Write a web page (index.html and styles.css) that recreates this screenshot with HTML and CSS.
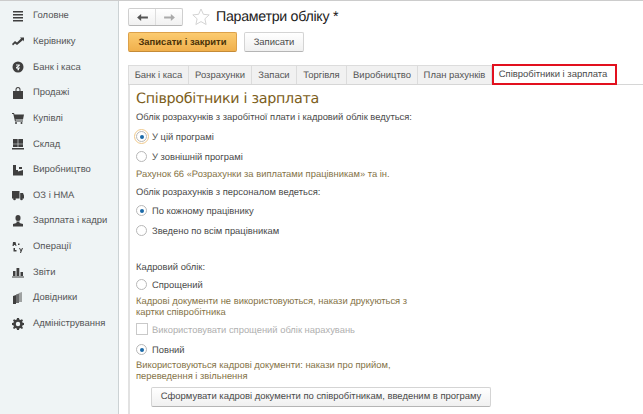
FILE: index.html
```html
<!DOCTYPE html>
<html lang="uk">
<head>
<meta charset="utf-8">
<title>Параметри обліку</title>
<link rel="stylesheet" href="styles.css">
</head>
<body>
<div class="app">
  <aside class="side">
    <div class="item"><svg class="ic" viewBox="0 0 12 12"><path d="M1 1h10v1.600H1zM1 4h10v1.600H1zM1 7h10v1.600H1zM1 10h10v1.600H1z"/></svg><span>Головне</span></div>
    <div class="item"><svg class="ic" viewBox="0 0 12 12"><path d="M0 9l3-3 2 1.500L9 3.500 8 2.500h4v4L11 5 5 10 3 8.500 1 10.500z"/></svg><span>Керівнику</span></div>
    <div class="item"><svg class="ic" viewBox="0 0 12 12"><circle cx="6" cy="6" r="5.500"/><path class="cut" d="M4 3.500h3.800v1.200L5.600 6.500h2.400v1H7v1.800H5.500V7.500H4V6.300L6.200 4.600H4z"/></svg><span>Банк і каса</span></div>
    <div class="item"><svg class="ic" viewBox="0 0 12 12"><path fill-rule="evenodd" d="M1 4h2.500V2.500a2.500 2.500 0 0 1 5 0V4H11v8H1zM4.500 4h3V2.500a1.500 1.500 0 0 0-3 0z"/></svg><span>Продажі</span></div>
    <div class="item"><svg class="ic" viewBox="0 0 12 12"><path d="M0 1h2l.5 1.500H12L11 7.500H3.500L3.800 8.500H11V9.500H3L1.300 2H0z"/><circle cx="4" cy="11" r="1"/><circle cx="9.500" cy="11" r="1"/></svg><span>Купівлі</span></div>
    <div class="item"><svg class="ic" viewBox="0 0 12 12"><path d="M1 1h4.700v4.700H1zM6.300 1H11v4.700H6.300zM1 6.300h4.700V9H1zM6.300 6.300H11V9H6.300zM0 10h12v1.500H0z"/></svg><span>Склад</span></div>
    <div class="item"><svg class="ic" viewBox="0 0 12 12"><path d="M1 1h3v5h2V7.500l5-1.500v5.500H1zM7 3h3v2H7z"/></svg><span>Виробництво</span></div>
    <div class="item"><svg class="ic" viewBox="0 0 12 12"><path d="M0 2h7.500v7.500H0zM8.200 4H11l1 2.500v3H8.200z"/><circle cx="2.500" cy="10" r="1.300"/><circle cx="9.500" cy="10" r="1.300"/></svg><span>ОЗ і НМА</span></div>
    <div class="item"><svg class="ic" viewBox="0 0 12 12"><path d="M3.500 2.500a2.500 2.500 0 0 1 5 0v1a2.500 2.500 0 0 1-5 0zM4.500 6.500h3v1.500l3.500 1V11.500H1V9l3.500-1z"/></svg><span>Зарплата і кадри</span></div>
    <div class="item"><svg class="ic" viewBox="0 0 12 12"><path d="M1 1h2.500l1 4H3.500L3.300 4H2L1.700 5H.5zM6 2.500h1.500V4H6zM1.500 7h1.500V9h1.500V10.500H1.500zM7 7h1l1 2 1-2h1L9 12H8l.5-2z"/></svg><span>Операції</span></div>
    <div class="item"><svg class="ic" viewBox="0 0 12 12"><path d="M1 5h2.500v5H1zM4.500 2h2.800v8H4.500zM8.500 6H11v4H8.500zM0 10.500h12v1H0z"/></svg><span>Звіти</span></div>
    <div class="item"><svg class="ic" viewBox="0 0 12 12"><path d="M1 4l3-1v9H1z"/><path opacity=".75" d="M4 2.500l3-1V11H4z"/><path opacity=".45" d="M7 1l3-1v10H7z"/></svg><span>Довідники</span></div>
    <div class="item"><svg class="ic" viewBox="0 0 12 12"><path fill-rule="evenodd" d="M5 0h2l.3 1.600 1.200.5L9.900 1.200l1.100 1-.9 1.500.5 1.100L12 5v2l-1.400.3-.5 1.200.9 1.400-1.100 1.100-1.400-.9-1.200.5L7 12H5l-.3-1.400-1.200-.5-1.400.9-1.100-1.100.9-1.400-.5-1.200L0 7V5l1.400-.2.500-1.100-.9-1.500 1.100-1 1.400.9 1.200-.5zM6 3.800a2.200 2.200 0 1 0 0 4.400 2.200 2.200 0 0 0 0-4.400z"/></svg><span>Адміністрування</span></div>
  </aside>
  <main class="main">
    <div class="head">
      <div class="nav">
        <button class="nav-btn"><svg viewBox="0 0 12 10"><path class="a-dark" d="M0 5l4.500-4v2.800H12v2.400H4.500V9z"/></svg></button>
        <button class="nav-btn"><svg viewBox="0 0 12 10"><path class="a-light" d="M12 5L7.500 1v2.800H0v2.400h7.500V9z"/></svg></button>
      </div>
      <svg class="star" viewBox="0 0 18 18"><path d="M9 1l2.400 5.300 5.800.6-4.300 3.900 1.200 5.700L9 13.600l-5.100 2.900 1.200-5.700L.8 6.900l5.800-.6z"/></svg>
      <h1 class="title">Параметри обліку *</h1>
    </div>
    <div class="actions">
      <button class="btn primary">Записати і закрити</button>
      <button class="btn">Записати</button>
    </div>
    <div class="tabs">
      <div class="tab t1">Банк і каса</div>
      <div class="tab t2">Розрахунки</div>
      <div class="tab t3">Запаси</div>
      <div class="tab t4">Торгівля</div>
      <div class="tab t5">Виробництво</div>
      <div class="tab t6">План рахунків</div>
      <div class="tab active">Співробітники і зарплата</div>
    </div>
    <section class="panel">
      <h2 class="h">Співробітники і зарплата</h2>
      <p class="label l-first">Облік розрахунків з заробітної плати і кадровий облік ведуться:</p>
      <div class="opt focus"><span class="radio on"></span>У цій програмі</div>
      <div class="opt"><span class="radio"></span>У зовнішній програмі</div>
      <p class="note n1">Рахунок 66 «Розрахунки за виплатами працівникам» та ін.</p>
      <p class="label l2">Облік розрахунків з персоналом ведеться:</p>
      <div class="opt"><span class="radio on"></span>По кожному працівнику</div>
      <div class="opt"><span class="radio"></span>Зведено по всім працівникам</div>
      <p class="label l3">Кадровий облік:</p>
      <div class="opt o3"><span class="radio"></span>Спрощений</div>
      <p class="note n2">Кадрові документи не використовуються, накази друкуються з картки співробітника</p>
      <div class="opt dis"><span class="check"></span>Використовувати спрощений облік нарахувань</div>
      <div class="opt"><span class="radio on"></span>Повний</div>
      <p class="note n2 n3">Використовуються кадрові документи: накази про прийом, переведення і звільнення</p>
      <button class="btn wide">Сформувати кадрові документи по співробітникам, введеним в програму</button>
    </section>
  </main>
</div>
</body>
</html>
```
FILE: styles.css
```css
* { box-sizing: border-box; }
html, body { margin: 0; height: 100%; }
body { font-family: "Liberation Sans", Arial, sans-serif; color: #4a4a4a; background: #fff; overflow: hidden; text-rendering: geometricPrecision; }
.app { display: flex; height: 414px; border-top: 1px solid #ccc; }
.side { width: 119px; flex: none; background: #eff4f5; border-right: 1px solid #ccd2d4; padding-top: 2px; }
.item { height: 25.65px; display: flex; align-items: center; padding-left: 12px; font-size: 9.45px; color: #555; }
.ic { width: 12px; height: 12px; margin-right: 9px; fill: #3f3f3f; flex: none; }
.cut { fill: #eff4f5; }
.main { flex: 1; padding: 7px 0 0 9px; min-width: 0; }
.head { display: flex; align-items: center; height: 18px; }
.nav { display: flex; width: 55px; height: 18px; border: 1px solid #cfcfcf; border-bottom-color: #b5b5b5; border-radius: 2px; background: linear-gradient(#fff, #f1f1f1); }
.nav-btn { flex: 1; border: 0; background: none; padding: 0; display: flex; align-items: center; justify-content: center; }
.nav-btn + .nav-btn { border-left: 1px solid #ddd; }
.nav-btn svg { width: 11px; height: 9px; }
.a-dark { fill: #555; }
.a-light { fill: #aaa; }
.star { width: 18px; height: 18px; margin-left: 9px; fill: #fff; stroke: #d4d4d4; stroke-width: 1; flex: none; }
.title { margin: 0 0 0 6px; font-size: 14.2px; letter-spacing: -.27px; font-weight: 400; color: #222; white-space: nowrap; }
.actions { display: flex; gap: 7px; margin-top: 6px; }
.btn { height: 20px; padding: 0; font: 9.45px "Liberation Sans", Arial, sans-serif; color: #4a4a4a; border: 1px solid #d4d4d4; border-bottom-color: #b5b5b5; border-radius: 2px; background: linear-gradient(#fff, #f0f0f0); text-rendering: geometricPrecision; }
.actions .btn { width: 60px; }
.actions .primary { width: 109px; font-weight: 700; color: #4a3208; background: linear-gradient(#fbcb70, #f0b04c); border-color: #dca14a #dca14a #c58b37; }
.tabs { display: flex; margin-top: 13px; height: 20px; border-bottom: 1px solid #d6d6d6; font-size: 9.45px; }
.tab { display: flex; align-items: center; justify-content: center; background: #f1f1f1; border: 1px solid #dcdcdc; border-left-width: 0; border-bottom: 0; color: #555; white-space: nowrap; }
.t1 { width: 61px; border-left-width: 1px; }
.t2 { width: 63px; }
.t3 { width: 45px; }
.t4 { width: 50px; }
.t5 { width: 71px; }
.t6 { width: 74px; }
.active { width: 125px; padding-right: 3px; background: #fff; border: 2px solid #e2101e; height: 21px; margin-top: -1px; color: #4a4a4a; }
.panel { border-left: 2px solid #e2e2e2; padding: 5px 0 0 6px; height: 330px; font-size: 9.4px; }
.panel p { margin: 0; }
.h { margin: 0; font: 400 14.3px/18px "DejaVu Sans", sans-serif; letter-spacing: -.3px; color: #7c5e1c; height: 18px; }
.label { line-height: 14px; }
.l-first { margin-top: 2px !important; margin-bottom: 3px !important; }
.l2 { margin-top: 4px !important; margin-bottom: 2px !important; }
.l3 { margin-top: 20px !important; }
.opt { display: flex; align-items: center; height: 19.500px; white-space: nowrap; }
.radio { width: 11px; height: 11px; border: 1px solid #b8b8b8; border-radius: 50%; background: #fff; margin-right: 5px; flex: none; position: relative; }
.radio.on::after { content: ""; position: absolute; left: 2.500px; top: 2.500px; width: 4px; height: 4px; border-radius: 50%; background: #1b6aa8; }
.focus .radio { outline: 1px solid #f0c98b; outline-offset: 1px; }
.check { width: 12px; height: 12px; border: 1px solid #c9c9c9; background: #fff; margin-right: 4px; flex: none; }
.dis { color: #b0b0b0; margin-bottom: 1px; }
.note { color: #857347; line-height: 11.500px; width: 290px; }
.n1 { line-height: 14px; margin-top: 1px !important; }
.n2 { margin-top: 0 !important; margin-bottom: 2px !important; }
.n3 { margin-top: -1px !important; }
.o3 { margin-top: 1px; }
.btn.wide { display: block; width: 340px; margin: 5px 0 0 15px; }
```
